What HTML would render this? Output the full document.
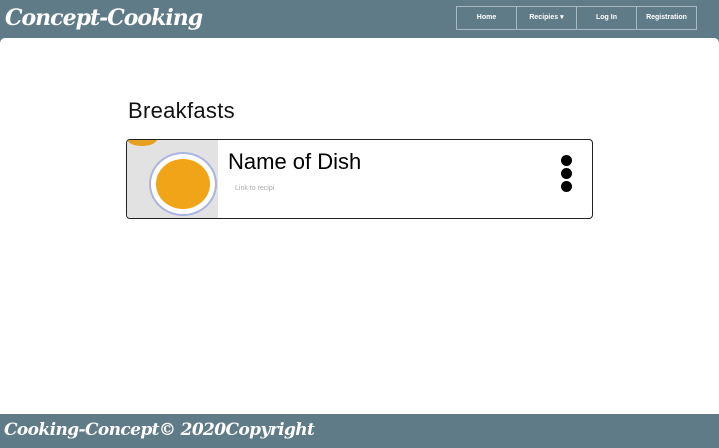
<!DOCTYPE html>
<html><head><style>
body{margin:0;width:719px;height:448px;background:#607b88;position:relative;overflow:hidden;font-family:"Liberation Sans",sans-serif}
.logo{position:absolute;left:5px;top:5px;color:#fff;font:italic bold 22px "DejaVu Serif",serif;letter-spacing:-1px}
.nav{position:absolute;left:456px;top:6px;display:flex;border:1px solid #aab8bf}
.nav div{width:59px;height:22px;border-right:1px solid #aab8bf;color:#fff;font-size:7px;font-weight:bold;text-align:center;line-height:22px}
.nav div:last-child{border-right:none}
.main{position:absolute;left:0;top:38px;width:719px;height:376px;background:#fff;border-radius:5px 5px 0 0}
h1{position:absolute;left:128px;top:60px;margin:0;font-size:22px;font-weight:normal;color:#111;letter-spacing:0.3px}
.card{position:absolute;left:126px;top:101px;width:465px;height:78px;border:1px solid #222;border-radius:4px;overflow:hidden}
.img{position:absolute;left:0;top:0;width:91px;height:78px;background:#e2e2e2}
.bowl{position:absolute;left:22px;top:12px;width:68px;height:64px;border-radius:50%;background:#fff;border:2px solid #aab4e0;box-sizing:border-box}
.soup{position:absolute;left:5px;top:5px;width:54px;height:50px;border-radius:50%;background:#f0a418}
.t{position:absolute;left:101px;top:9px;font-size:22px;color:#000}
.l{position:absolute;left:108px;top:45px;font-size:7px;color:#aaa}
.d{position:absolute;left:434px;width:11px;height:11px;border-radius:50%;background:#000}
.foot{position:absolute;left:4px;top:420px;color:#fff;font:italic bold 17px "DejaVu Serif",serif;letter-spacing:-0.6px}
</style></head><body>
<div class="logo">Concept-Cooking</div>
<div class="nav"><div>Home</div><div>Recipies ▾</div><div>Log In</div><div>Registration</div></div>
<div class="main">
<h1>Breakfasts</h1>
<div class="card">
<div class="img"><div style="position:absolute;left:0;top:-8px;width:30px;height:14px;border-radius:50%;background:#e8a020"></div><div class="bowl"><div class="soup"></div></div></div>
<div class="t">Name of Dish</div>
<div class="l">Link to recipi</div>
<div class="d" style="top:15px"></div><div class="d" style="top:28px"></div><div class="d" style="top:41px"></div>
</div>
</div>
<div class="foot">Cooking-Concept© 2020Copyright</div>
</body></html>
